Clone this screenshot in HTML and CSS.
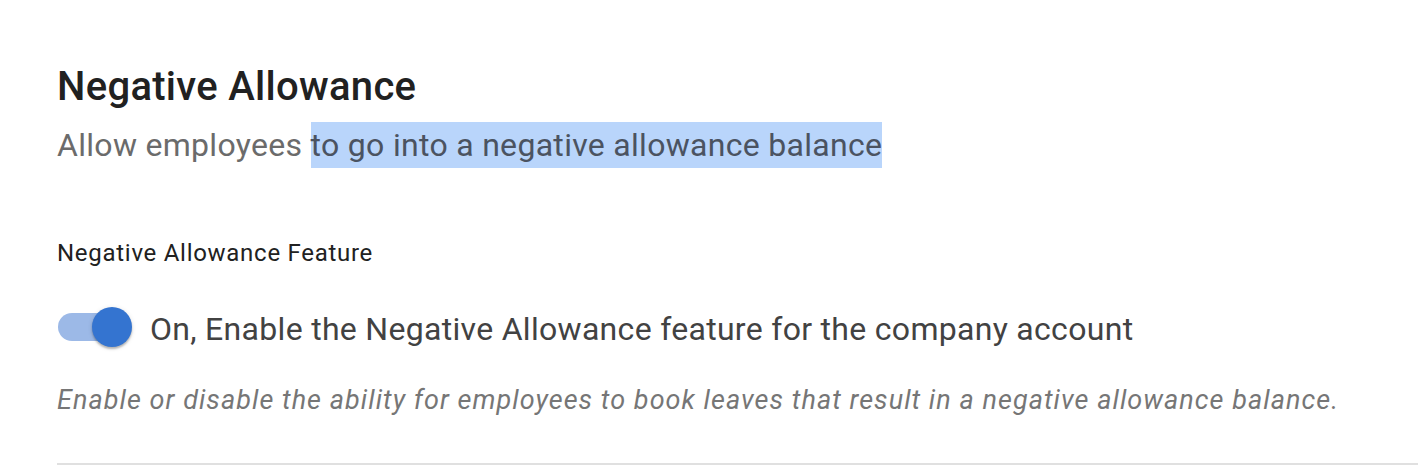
FILE: index.html
```html
<!DOCTYPE html>
<html lang="en">
<head>
<meta charset="utf-8">
<title>Negative Allowance</title>
<link rel="stylesheet" href="styles.css">
</head>
<body>
<section class="settings">
  <header class="settings-head">
    <h2 class="settings-title">Negative Allowance</h2>
    <p class="settings-sub">Allow employees <span class="sel">to go into a negative allowance balance</span></p>
  </header>
  <div class="field">
    <div class="field-label">Negative Allowance Feature</div>
    <label class="switch-row">
      <span class="switch"><span class="switch-track"></span><span class="switch-thumb"></span></span>
      <span class="switch-text">On, Enable the Negative Allowance feature for the company account</span>
    </label>
    <p class="field-help">Enable or disable the ability for employees to book leaves that result in a negative allowance balance.</p>
  </div>
  <hr class="divider">
</section>
</body>
</html>
```
FILE: styles.css
```css
* { box-sizing: border-box; }
html, body { margin: 0; background: #fff; }
body { font-family: Roboto, "Noto Sans", sans-serif; }

.settings {
  padding: 63px 0 0 57px;
  display: flex;
  flex-direction: column;
}
.settings-title {
  margin: 0;
  font-size: 40px;
  font-weight: 500;
  line-height: 48px;
  letter-spacing: 0.3px;
  color: #212121;
}
.settings-sub {
  margin: 11px 0 0;
  font-size: 32px;
  line-height: 46px;
  letter-spacing: 0.3px;
  color: #6b6b6b;
}
.sel {
  display: inline-block;
  line-height: 46px;
  background: #b9d5fb;
  color: #4b5361;
}
.field { margin-top: 71px; display: flex; flex-direction: column; }
.field-label {
  font-size: 24px;
  line-height: 28px;
  letter-spacing: 0.72px;
  color: #212121;
}
.switch-row {
  margin-top: 40px;
  display: flex;
  align-items: flex-start;
  gap: 18px;
}
.switch {
  position: relative;
  width: 75px;
  height: 40px;
  flex: none;
}
.switch-track {
  position: absolute;
  left: 1px; top: 6px;
  width: 70px; height: 28px;
  border-radius: 14px;
  background: #9cb9e7;
}
.switch-thumb {
  position: absolute;
  left: 35px; top: 0;
  width: 40px; height: 40px;
  border-radius: 50%;
  background: #3474d0;
  box-shadow: 0 2px 2px rgba(0,0,0,0.24), 0 1px 5px rgba(0,0,0,0.12);
}
.switch-text {
  padding-top: 2px;
  font-size: 32px;
  line-height: 40px;
  letter-spacing: 0.3px;
  color: #424242;
}
.field-help {
  margin: 35px 0 0;
  font-size: 27px;
  line-height: 32px;
  letter-spacing: 1.05px;
  font-style: italic;
  color: #767676;
}
.divider {
  margin: 47px 0 0;
  border: 0;
  height: 2px;
  background: #e0e0e0;
}
```
